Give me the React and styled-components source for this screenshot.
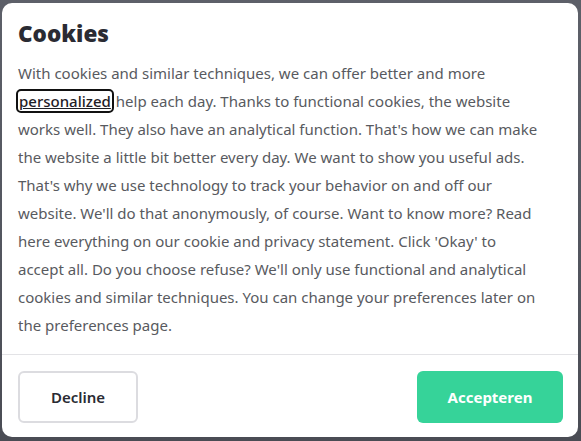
import React from "react";
import styled, { createGlobalStyle } from "styled-components";

const Global = createGlobalStyle`
  html, body { margin: 0; padding: 0; }
  body {
    width: 581px;
    height: 441px;
    overflow: hidden;
    font-family: "Noto Sans", "Open Sans", sans-serif;
    background: linear-gradient(180deg, #5d6069 0%, #52555e 60%, #4a4c54 100%);
  }
`;

const Backdrop = styled.div`
  width: 581px;
  height: 441px;
  box-sizing: border-box;
  padding: 3px 3px 4px 2px;
  display: flex;
`;

const Dialog = styled.div`
  flex: 1;
  background: #fff;
  border-radius: 10px;
  display: flex;
  flex-direction: column;
  overflow: hidden;
`;

const Body = styled.div`
  padding: 15px 36px 14px 16px;
`;

const Title = styled.h2`
  margin: 0 0 9px 0;
  font-size: 22.5px;
  font-weight: 900;
  color: #2a2b33;
  line-height: 32px;
`;

const Text = styled.p`
  margin: 0;
  font-size: 15px;
  line-height: 28px;
  color: #585a60;
`;

const FocusLink = styled.a`
  color: #1f2026;
  font-weight: 500;
  text-decoration: underline;
  outline: 2px solid #111;
  outline-offset: 0px;
  border-radius: 3px;
  padding: 0 1px;
`;

const Footer = styled.div`
  border-top: 1px solid #e3e3e6;
  padding: 16px 15px 14px 16px;
  display: flex;
  justify-content: space-between;
  margin-top: auto;
`;

const Button = styled.button`
  height: 52px;
  width: ${(p) => p.$w}px;
  border-radius: 6px;
  font-family: "Noto Sans", sans-serif;
  font-size: 15px;
  font-weight: ${(p) => (p.$primary ? 700 : 600)};
  color: ${(p) => (p.$primary ? "#fff" : "#2a2b33")};
  background: ${(p) => (p.$primary ? "#36d399" : "#fff")};
  border: ${(p) => (p.$primary ? "none" : "2px solid #dcdce0")};
  cursor: pointer;
`;

export default function App() {
  return (
    <>
      <Global />
      <Backdrop>
        <Dialog>
          <Body>
            <Title>Cookies</Title>
            <Text>
              With cookies and similar techniques, we can offer better and more{" "}
              <FocusLink href="#">personalized</FocusLink> help each day. Thanks to
              functional cookies, the website works well. They also have an
              analytical function. That's how we can make the website a little bit
              better every day. We want to show you useful ads. That's why we use
              technology to track your behavior on and off our website. We'll do
              that anonymously, of course. Want to know more? Read here everything
              on our cookie and privacy statement. Click 'Okay' to accept all. Do
              you choose refuse? We'll only use functional and analytical cookies
              and similar techniques. You can change your preferences later on the
              preferences page.
            </Text>
          </Body>
          <Footer>
            <Button $w={120}>Decline</Button>
            <Button $w={146} $primary>
              Accepteren
            </Button>
          </Footer>
        </Dialog>
      </Backdrop>
    </>
  );
}
